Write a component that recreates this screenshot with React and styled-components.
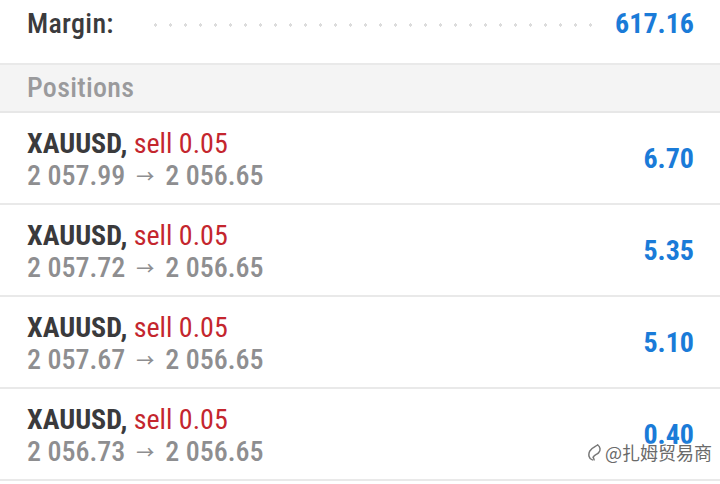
import React from "react";
import styled, { createGlobalStyle } from "styled-components";

const Global = createGlobalStyle`
  html, body { margin: 0; padding: 0; background: #fff; }
  body { width: 720px; height: 484px; overflow: hidden; font-family: "Roboto Condensed", Roboto, "Noto Sans CJK SC", sans-serif; }
`;

const Page = styled.div`
  position: relative;
  width: 720px;
  height: 484px;
  background: #fff;
`;

const SummaryRow = styled.div`
  display: flex;
  align-items: center;
  height: 46px;
  padding: 0 26px 17px 27px;
  border-bottom: 2px solid #e9e9e9;
`;

const SummaryLabel = styled.span`
  font-size: 28px;
  font-weight: 500;
  letter-spacing: 0.3px;
  color: #3b3b3d;
`;

const Leader = styled.span`
  flex: 1;
  height: 4px;
  margin: 4px 20px 0 34px;
  background-image: radial-gradient(circle, #dcdcdc 1.5px, transparent 1.8px);
  background-size: 15px 4px;
  background-repeat: repeat-x;
`;

const SummaryValue = styled.span`
  font-size: 28px;
  font-weight: 700;
  color: #1a7bd8;
`;

const SectionHeader = styled.div`
  display: flex;
  align-items: center;
  box-sizing: content-box;
  height: 44px;
  padding: 0 27px 2px;
  background: #f4f4f4;
  border-bottom: 2px solid #e7e7e7;
  font-size: 28px;
  font-weight: 500;
  letter-spacing: 0.3px;
  color: #9a9a9c;
`;

const PositionRow = styled.div`
  display: flex;
  align-items: center;
  justify-content: space-between;
  height: 90px;
  padding: 0 26px 0 27px;
  border-bottom: 2px solid #e9e9e9;
`;

const Info = styled.div`
  display: flex;
  flex-direction: column;
  padding-top: 3px;
`;

const Line = styled.div`
  height: 32px;
  line-height: 32px;
  font-size: 28px;
  white-space: nowrap;
`;

const Symbol = styled.span`
  font-weight: 700;
  color: #3a3a3c;
`;

const Side = styled.span`
  font-weight: 400;
  color: #c4262e;
`;

const Prices = styled(Line)`
  font-weight: 500;
  color: #8e8e90;
`;

const Arrow = styled.span`
  display: inline-block;
  font-size: 18px;
  margin: 0 11px 0 11px;
  vertical-align: 2px;
`;

const Profit = styled.span`
  font-size: 28px;
  font-weight: 700;
  color: #1a7bd8;
`;

const Watermark = styled.div`
  position: absolute;
  left: 588px;
  top: 439px;
  display: flex;
  align-items: center;
  gap: 3px;
  white-space: nowrap;
  font-family: "Noto Sans CJK SC", sans-serif;
  font-size: 18px;
  color: #6a6a6a;
  text-shadow: 0 0 2px #fff, 0 0 2px #fff, 0 0 3px #fff;
`;

const positions = [
  { open: "2 057.99", close: "2 056.65", profit: "6.70" },
  { open: "2 057.72", close: "2 056.65", profit: "5.35" },
  { open: "2 057.67", close: "2 056.65", profit: "5.10" },
  { open: "2 056.73", close: "2 056.65", profit: "0.40" },
];

function WatermarkIcon() {
  return (
    <svg width="14" height="20" viewBox="0 0 16 22" fill="none" stroke="#777" strokeWidth="1.7" strokeLinecap="round">
      <path d="M5 20 C1 19 0 14 2 10 C4 6 8 5 11 3" />
      <path d="M11 3 C14 5 15 9 12 12 C10 14 7 14 6 17" />
      <path d="M6 17 L7 20" />
    </svg>
  );
}

export default function App() {
  return (
    <Page>
      <Global />
      <SummaryRow>
        <SummaryLabel>Margin:</SummaryLabel>
        <Leader />
        <SummaryValue>617.16</SummaryValue>
      </SummaryRow>
      <SectionHeader>Positions</SectionHeader>
      {positions.map((p, i) => (
        <PositionRow key={i}>
          <Info>
            <Line>
              <Symbol>XAUUSD,</Symbol> <Side>sell 0.05</Side>
            </Line>
            <Prices>
              {p.open}
              <Arrow>→</Arrow>
              {p.close}
            </Prices>
          </Info>
          <Profit>{p.profit}</Profit>
        </PositionRow>
      ))}
      <Watermark>
        <WatermarkIcon />
        <span>@扎姆贸易商</span>
      </Watermark>
    </Page>
  );
}
